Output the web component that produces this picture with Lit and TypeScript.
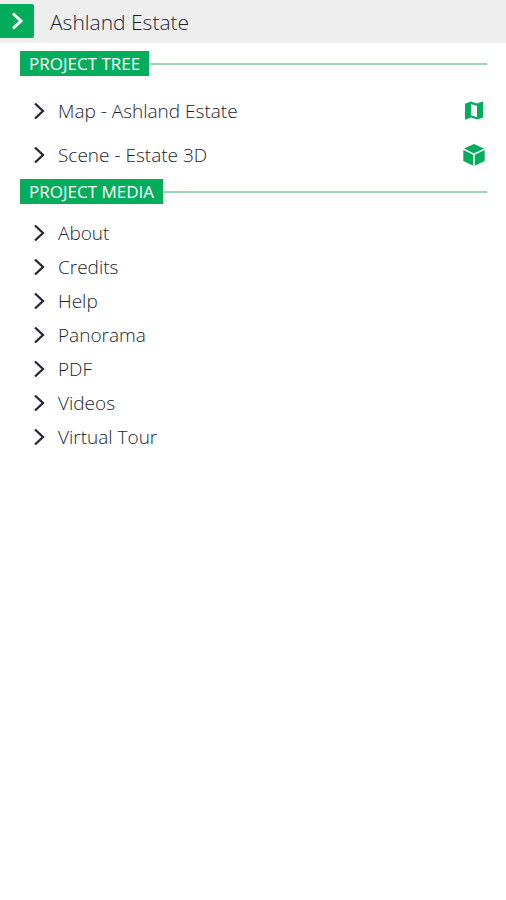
import { LitElement, html, svg, css, nothing } from "lit";
import { customElement } from "lit/decorators.js";

const mapIcon = svg`<path fill-rule="evenodd" d="M2 4.2 Q2 3.6 2.6 3.4 L8 1.6 L14 3.6 L19.2 1.6 Q20 1.4 20 2.2 V16.8 Q20 17.5 19.4 17.7 L14 19.5 L8 17.5 L2.8 19.5 Q2 19.7 2 18.9 Z M8 4 V15.3 L14 17.3 V6 Z"/>`;
const cubeIcon = svg`<path d="M11 0 L21 4.6 L11 9.4 L1 4.6 Z M0.3 6 L10.2 10.8 V21.8 L0.3 17 Z M21.7 6 L11.8 10.8 V21.8 L21.7 17 Z"/>`;

const tree = [
  { label: "Map - Ashland Estate", icon: mapIcon },
  { label: "Scene - Estate 3D", icon: cubeIcon },
];
const media = ["About", "Credits", "Help", "Panorama", "PDF", "Videos", "Virtual Tour"];

@customElement("app-root")
export class AppRoot extends LitElement {
  static styles = css`
    :host {
      display: block;
      min-height: 100vh;
      background: #fff;
      color: #1c1e30;
      font-family: "Open Sans", "Noto Sans", sans-serif;
      font-size: 19px;
      font-weight: 300;
    }
    button {
      border: 0;
      margin: 0;
      padding: 0;
      background: none;
      color: inherit;
      font: inherit;
      cursor: pointer;
    }
    svg {
      display: block;
      flex: none;
    }
    header {
      display: flex;
      gap: 16px;
      padding: 4px 0 3px;
      background: #eee;
    }
    .toggle {
      display: grid;
      place-items: center;
      width: 34px;
      height: 34px;
      border-radius: 0 2px 2px 0;
      background: #04ad5c;
    }
    .chev {
      fill: none;
      stroke: #25263a;
      stroke-width: 2.3;
    }
    .toggle .chev {
      stroke: #fff;
      stroke-width: 3;
    }
    h1 {
      margin: 0;
      font-size: 21px;
      font-weight: 300;
      line-height: 36px;
    }
    main {
      padding: 8px 19px 8px 20px;
    }
    h2 {
      display: flex;
      align-items: center;
      margin: 0;
      font-size: 17px;
      font-weight: 400;
      line-height: 25px;
    }
    h2::after {
      content: "";
      flex: 1;
      height: 2px;
      background: #9ad6b1;
    }
    .tag {
      padding: 0 9px;
      background: #04ad5c;
      color: #fff;
    }
    ul {
      list-style: none;
      margin: 0;
      padding: 12px 0 2px;
    }
    .row {
      display: flex;
      align-items: center;
      gap: 12px;
      width: 100%;
      height: 34px;
      padding: 0 2px 0 12px;
      text-align: left;
    }
    .tree {
      padding-top: 13px;
    }
    .tree .row {
      height: 44px;
    }
    .name {
      flex: 1;
    }
    .kind {
      fill: #04ad5c;
    }
  `;

  private chevron() {
    return html`<svg class="chev" width="14" height="18" viewBox="0 0 14 18" aria-hidden="true">
      <path d="M3 1.5 L11 9 L3 16.5" />
    </svg>`;
  }

  private row(label: string, icon?: unknown) {
    return html`<li>
      <button class="row" aria-expanded="false">
        ${this.chevron()}<span class="name">${label}</span>
        ${icon
          ? html`<svg class="kind" width="22" height="22" viewBox="0 0 22 22" aria-hidden="true">${icon}</svg>`
          : nothing}
      </button>
    </li>`;
  }

  render() {
    return html`
      <header>
        <button class="toggle" aria-label="Toggle panel">${this.chevron()}</button>
        <h1>Ashland Estate</h1>
      </header>
      <main>
        <h2><span class="tag">PROJECT TREE</span></h2>
        <ul class="tree">
          ${tree.map((t) => this.row(t.label, t.icon))}
        </ul>
        <h2><span class="tag">PROJECT MEDIA</span></h2>
        <ul>
          ${media.map((m) => this.row(m))}
        </ul>
      </main>
    `;
  }
}
